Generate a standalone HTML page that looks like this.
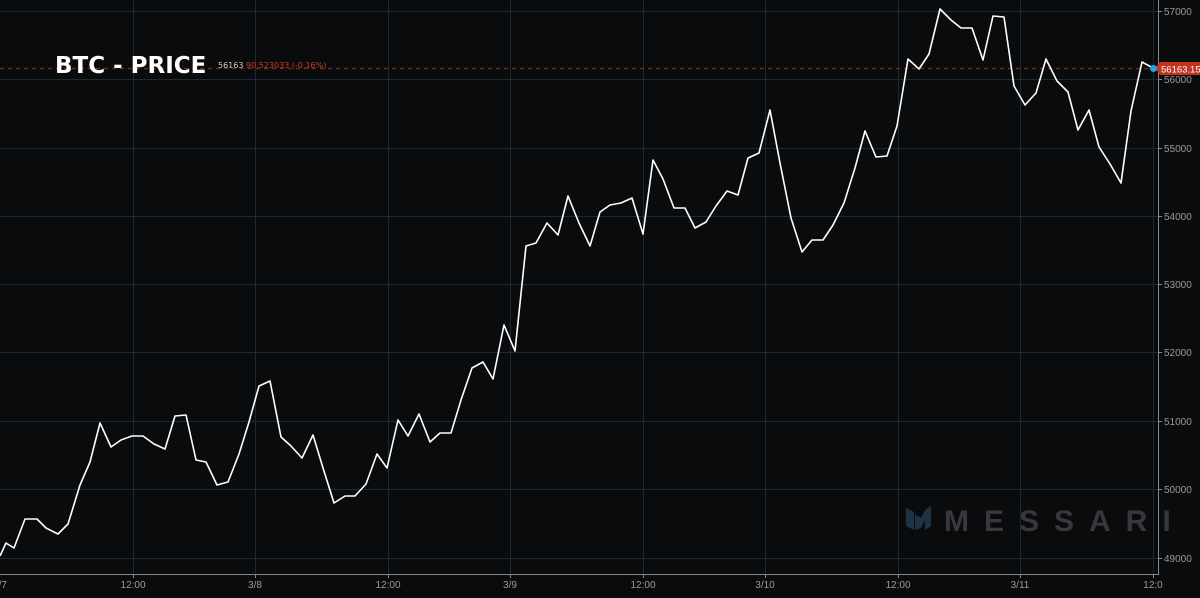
<!DOCTYPE html>
<html><head><meta charset="utf-8"><style>
html,body{margin:0;padding:0;background:#0a0b0d;width:1200px;height:598px;overflow:hidden;font-family:"Liberation Sans",sans-serif}
</style></head><body>
<svg width="1200" height="598" xmlns="http://www.w3.org/2000/svg" style="position:absolute;left:0;top:0">
<rect width="1200" height="598" fill="#0a0b0d"/>
<g stroke="#1c2a36" stroke-width="1">
<line x1="0" y1="11.5" x2="1158" y2="11.5"/><line x1="0" y1="79.5" x2="1158" y2="79.5"/>
<line x1="0" y1="148.5" x2="1158" y2="148.5"/><line x1="0" y1="216.5" x2="1158" y2="216.5"/>
<line x1="0" y1="284.5" x2="1158" y2="284.5"/><line x1="0" y1="352.5" x2="1158" y2="352.5"/>
<line x1="0" y1="421.5" x2="1158" y2="421.5"/><line x1="0" y1="489.5" x2="1158" y2="489.5"/>
<line x1="0" y1="558.5" x2="1158" y2="558.5"/>
<line x1="133.5" y1="0" x2="133.5" y2="574"/><line x1="255.5" y1="0" x2="255.5" y2="574"/>
<line x1="388.5" y1="0" x2="388.5" y2="574"/><line x1="510.5" y1="0" x2="510.5" y2="574"/>
<line x1="643.5" y1="0" x2="643.5" y2="574"/><line x1="765.5" y1="0" x2="765.5" y2="574"/>
<line x1="898.5" y1="0" x2="898.5" y2="574"/><line x1="1020.5" y1="0" x2="1020.5" y2="574"/>
<line x1="1153.5" y1="0" x2="1153.5" y2="574"/>
</g>
<g fill="#36383c" font-weight="bold" font-size="30" letter-spacing="15">
<text x="944" y="531">MESSARI</text>
</g>
<g fill="#1c3346"><polygon points="906,508 914,512 914,530 906,526"/><polygon points="915,514 921,518 925,510 931,506 931,526 925,530 925,520 921,528 915,530"/></g>
<line x1="0" y1="68.5" x2="1158" y2="68.5" stroke="#7a2a1c" stroke-width="1.2" stroke-dasharray="4,4"/>
<polyline fill="none" stroke="#ffffff" stroke-width="1.6" stroke-linejoin="round" points="0,556 6,543 14,548 25,519 37,519 46,528 58,534 68,524 80,485 90,462 100,423 111,447 121,440 132,436 143,436 154,444 165,449 175,416 186,415 196,460 206,462 217,485 228,482 239,454 249,422 259,386 270,381 281,437 291,446 302,458 313,435 323,468 334,503 345,496 355,496 366,484 377,454 387,468 398,420 408,436 419,414 430,442 440,433 451,433 461,400 472,368 483,362 493,379 504,325 515,351 526,246 536,243 547,223 558,235 568,196 579,223 590,246 600,212 610,205 621,203 632,198 643,234 653,160 663,179 674,208 685,208 695,228 706,222 716,206 727,191 738,195 748,158 759,153 770,110 780,163 791,218 802,252 812,240 823,240 833,225 844,203 855,168 865,131 876,157 887,156 897,126 908,59 919,69 929,54 940,9 951,20 961,28 972,28 983,60 993,16 1004,17 1014,86 1025,105 1036,93 1046,59 1057,81 1068,92 1078,130 1089,110 1099,147 1110,164 1121,183 1131,111 1142,62 1153,68"/>
<line x1="1158.5" y1="0" x2="1158.5" y2="575" stroke="#888" stroke-width="1"/>
<line x1="0" y1="574.5" x2="1159" y2="574.5" stroke="#888" stroke-width="1"/>
<g stroke="#888"><line x1="133.5" y1="574" x2="133.5" y2="578"/><line x1="255.5" y1="574" x2="255.5" y2="578"/><line x1="388.5" y1="574" x2="388.5" y2="578"/><line x1="510.5" y1="574" x2="510.5" y2="578"/><line x1="643.5" y1="574" x2="643.5" y2="578"/><line x1="765.5" y1="574" x2="765.5" y2="578"/><line x1="898.5" y1="574" x2="898.5" y2="578"/><line x1="1020.5" y1="574" x2="1020.5" y2="578"/><line x1="1153.5" y1="574" x2="1153.5" y2="578"/>
<line x1="1158" y1="11.5" x2="1162" y2="11.5"/><line x1="1158" y1="79.5" x2="1162" y2="79.5"/><line x1="1158" y1="148.5" x2="1162" y2="148.5"/><line x1="1158" y1="216.5" x2="1162" y2="216.5"/><line x1="1158" y1="284.5" x2="1162" y2="284.5"/><line x1="1158" y1="352.5" x2="1162" y2="352.5"/><line x1="1158" y1="421.5" x2="1162" y2="421.5"/><line x1="1158" y1="489.5" x2="1162" y2="489.5"/><line x1="1158" y1="558.5" x2="1162" y2="558.5"/></g>
<g fill="#9a9a9a" font-size="10">
<text x="1164" y="15">57000</text><text x="1164" y="83">56000</text><text x="1164" y="152">55000</text><text x="1164" y="220">54000</text><text x="1164" y="288">53000</text><text x="1164" y="356">52000</text><text x="1164" y="425">51000</text><text x="1164" y="493">50000</text><text x="1164" y="562">49000</text>
</g>
<g fill="#9a9a9a" font-size="10" text-anchor="middle">
<text x="0" y="588">3/7</text><text x="133" y="588">12:00</text><text x="255" y="588">3/8</text><text x="388" y="588">12:00</text><text x="510" y="588">3/9</text><text x="643" y="588">12:00</text><text x="765" y="588">3/10</text><text x="898" y="588">12:00</text><text x="1020" y="588">3/11</text><text x="1153" y="588">12:0</text>
</g>
<polygon points="1155,68 1160,62 1200,62 1200,75 1160,75" fill="#c0341b"/>
<text x="1161" y="72.5" fill="#fff" font-size="9.5">56163.151</text>
<circle cx="1153.5" cy="68.5" r="3.5" fill="#1ea7e0"/>
<text x="55" y="73" fill="#fff" font-size="23" font-weight="bold" font-family="DejaVu Sans, sans-serif">BTC - PRICE</text>
<text x="218" y="68" font-size="8" font-family="DejaVu Sans, sans-serif"><tspan fill="#ccc">56163</tspan><tspan fill="#d23a22"> 90.523033 (-0.16%)</tspan></text>
</svg>
</body></html>
